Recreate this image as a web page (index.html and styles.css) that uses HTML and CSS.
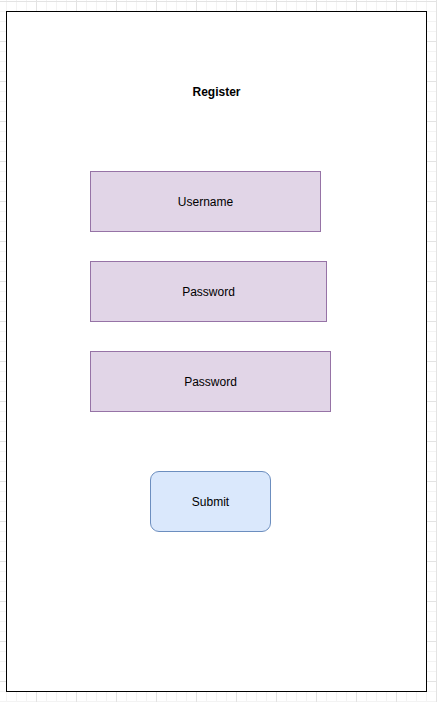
FILE: index.html
```html
<!DOCTYPE html>
<html lang="en">
<head>
<meta charset="utf-8">
<title>Register</title>
<link rel="stylesheet" href="styles.css">
</head>
<body>
  <main class="frame">
    <h1 class="title">Register</h1>
    <div class="fields">
      <div class="field field-username">Username</div>
      <div class="field field-password">Password</div>
      <div class="field field-confirm">Password</div>
      <div class="submit">Submit</div>
    </div>
  </main>
</body>
</html>
```

FILE: styles.css
```css
html {
  min-height: 100%;
  background-color: #ffffff;
  background-image:
    linear-gradient(to right, #e3e3e3 1px, transparent 1px),
    linear-gradient(to bottom, #e3e3e3 1px, transparent 1px),
    linear-gradient(to right, #f3f3f3 1px, transparent 1px),
    linear-gradient(to bottom, #f3f3f3 1px, transparent 1px);
  background-size: 40px 40px, 40px 40px, 10px 10px, 10px 10px;
  background-position: 36px 41px, 36px 41px, 6px 1px, 6px 1px;
}

body {
  margin: 0;
  padding: 11px 0 0 6px;
  font-family: "Liberation Sans", Arial, Helvetica, sans-serif;
  font-size: 12px;
  color: #000000;
}

.frame {
  box-sizing: border-box;
  width: 421px;
  height: 681px;
  border: 1px solid #000000;
  background: #ffffff;
  padding-top: 73px;
  display: flex;
  flex-direction: column;
}

.title {
  margin: 0;
  font-size: 12px;
  font-weight: bold;
  line-height: 14px;
  text-align: center;
}

.fields {
  margin-top: 72px;
  padding-left: 83px;
  display: flex;
  flex-direction: column;
  align-items: flex-start;
  gap: 29px;
}

.field,
.submit {
  box-sizing: border-box;
  height: 61px;
  display: flex;
  align-items: center;
  justify-content: center;
  line-height: 14px;
}

.field {
  background: #e1d5e7;
  border: 1px solid #9673a6;
}

.field-username { width: 231px; }
.field-password { width: 237px; }
.field-confirm { width: 241px; }

.submit {
  width: 121px;
  margin-top: 30px;
  margin-left: 60px;
  background: #dae8fc;
  border: 1px solid #6c8ebf;
  border-radius: 9px;
}
```
